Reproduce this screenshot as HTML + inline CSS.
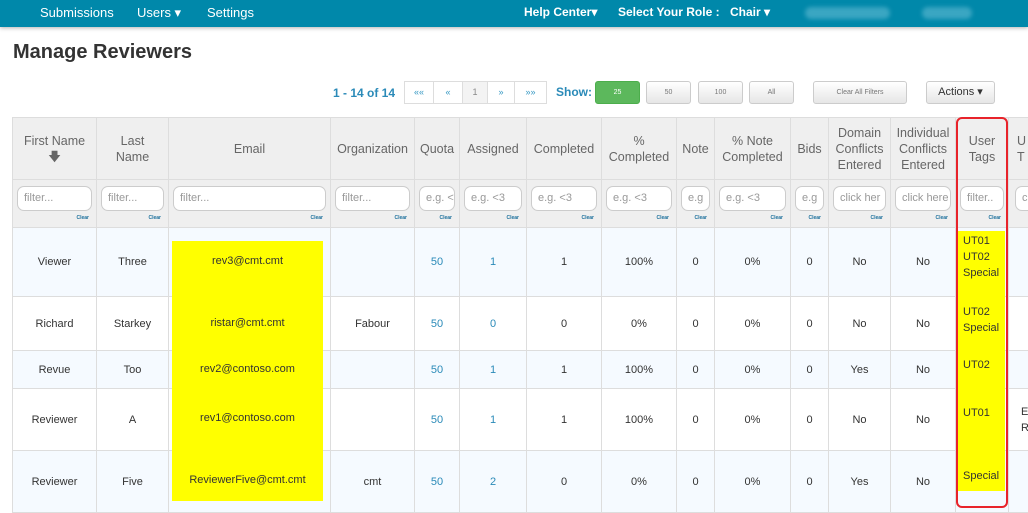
<!DOCTYPE html>
<html><head><meta charset="utf-8"><style>
*{box-sizing:border-box;margin:0;padding:0}
body{width:1028px;height:511px;overflow:hidden;background:#fff;font-family:"Liberation Sans",Arial,sans-serif;position:relative;color:#333}
.nav{position:absolute;left:0;top:0;width:1028px;height:27px;background:#0088aa;box-shadow:0 1px 4px rgba(0,0,0,.3);color:#fff;font-size:13px}
.nav span{position:absolute;top:5px}
.blur{position:absolute;top:7px;height:12px;background:#3aa6c2;border-radius:6px;filter:blur(2px)}
h1{position:absolute;left:13px;top:41px;font-size:20px;font-weight:bold;color:#333}
.pg{position:absolute;top:81px;height:23px;border:1px solid #ddd;font-size:9px;color:#3a9ac4;text-align:center;line-height:21px;background:#fff}
.btn{position:absolute;top:81px;height:23px;border:1px solid #ccc;border-radius:3px;background:linear-gradient(#fff,#e6e6e6);font-size:7px;color:#777;text-align:center;line-height:21px}
table{position:absolute;left:12px;top:117px;width:1036px;border-collapse:collapse;table-layout:fixed;font-size:12px}
td,th{border:1px solid #ddd;text-align:center;vertical-align:middle;font-weight:normal;color:#555;overflow:hidden}
th{background:#efefef;font-size:12.5px;line-height:16px;height:62px;color:#666;white-space:nowrap}
tr.f td{background:#efefef;height:48px;position:relative;vertical-align:top;padding-top:6px}
.in{display:block;margin:0 auto;height:25px;border:1px solid #ccc;border-radius:7px;background:#fff;font-size:11px;color:#999;text-align:left;padding:5px 0 0 6px;overflow:hidden;white-space:nowrap;width:calc(100% - 8px)}
.cl{position:absolute;right:7px;bottom:6px;font-size:5px;color:#1b6f9c;font-weight:bold}
td{font-size:11px;color:#333}
tr.a td{background:#f5faff}
.b{color:#2a8ab8}
.yl{position:absolute;background:#ffff00}
.tag{position:absolute;left:963px;font-size:11px;line-height:16px;color:#333}
</style></head><body>
<div class="nav">
<span style="left:40px">Submissions</span><span style="left:137px">Users ▾</span><span style="left:207px">Settings</span>
<span style="left:524px;font-weight:bold;font-size:12px">Help Center▾</span>
<span style="left:618px;font-weight:bold;font-size:12px">Select Your Role :</span>
<span style="left:730px;font-weight:bold;font-size:12px">Chair ▾</span>
<div class="blur" style="left:805px;width:85px"></div><div class="blur" style="left:922px;width:50px"></div>
</div>
<h1>Manage Reviewers</h1>
<div style="position:absolute;left:333px;top:86px;font-size:12px;font-weight:bold;color:#2a8ab8">1 - 14 of 14</div>
<div class="pg" style="left:404px;width:30px">««</div><div class="pg" style="left:433px;width:30px">«</div><div class="pg" style="left:462px;width:26px;background:#f3f3f3;color:#888">1</div><div class="pg" style="left:487px;width:28px">»</div><div class="pg" style="left:514px;width:33px">»»</div>
<div style="position:absolute;left:556px;top:85px;font-size:12px;font-weight:bold;color:#2a8ab8">Show:</div>
<div class="btn" style="left:595px;width:45px;background:#5cb85c;border-color:#4cae4c;color:#fff">25</div>
<div class="btn" style="left:646px;width:45px">50</div>
<div class="btn" style="left:698px;width:45px">100</div>
<div class="btn" style="left:749px;width:45px">All</div>
<div class="btn" style="left:813px;width:94px">Clear All Filters</div>
<div class="btn" style="left:926px;width:69px;font-size:11px;color:#333">Actions ▾</div>
<table>
<colgroup><col style="width:84px"><col style="width:72px"><col style="width:162px"><col style="width:84px"><col style="width:45px"><col style="width:67px"><col style="width:75px"><col style="width:75px"><col style="width:38px"><col style="width:76px"><col style="width:38px"><col style="width:62px"><col style="width:65px"><col style="width:53px"><col style="width:40px"></colgroup>
<tr><th>First Name<br>🡇</th><th>Last<br>Name</th><th>Email</th><th>Organization</th><th>Quota</th><th>Assigned</th><th>Completed</th><th>%<br>Completed</th><th>Note</th><th>% Note<br>Completed</th><th>Bids</th><th>Domain<br>Conflicts<br>Entered</th><th>Individual<br>Conflicts<br>Entered</th><th>User<br>Tags</th><th style="text-align:left;padding-left:8px">U<br>T</th></tr>
<tr class="f"><td><span class="in">filter...</span><span class="cl">Clear</span></td><td><span class="in">filter...</span><span class="cl">Clear</span></td><td><span class="in">filter...</span><span class="cl">Clear</span></td><td><span class="in">filter...</span><span class="cl">Clear</span></td><td><span class="in">e.g. &lt;</span><span class="cl">Clear</span></td><td><span class="in">e.g. &lt;3</span><span class="cl">Clear</span></td><td><span class="in">e.g. &lt;3</span><span class="cl">Clear</span></td><td><span class="in">e.g. &lt;3</span><span class="cl">Clear</span></td><td><span class="in">e.g</span><span class="cl">Clear</span></td><td><span class="in">e.g. &lt;3</span><span class="cl">Clear</span></td><td><span class="in">e.g</span><span class="cl">Clear</span></td><td><span class="in">click her</span><span class="cl">Clear</span></td><td><span class="in">click here</span><span class="cl">Clear</span></td><td><span class="in">filter..</span><span class="cl">Clear</span></td><td><span class="in" style="margin-left:6px">cli</span></td></tr>
<tr class="a" style="height:69px"><td>Viewer</td><td>Three</td><td></td><td></td><td class="b">50</td><td class="b">1</td><td>1</td><td>100%</td><td>0</td><td>0%</td><td>0</td><td>No</td><td>No</td><td></td><td></td></tr>
<tr style="height:54px"><td>Richard</td><td>Starkey</td><td></td><td>Fabour</td><td class="b">50</td><td class="b">0</td><td>0</td><td>0%</td><td>0</td><td>0%</td><td>0</td><td>No</td><td>No</td><td></td><td></td></tr>
<tr class="a" style="height:38px"><td>Revue</td><td>Too</td><td></td><td></td><td class="b">50</td><td class="b">1</td><td>1</td><td>100%</td><td>0</td><td>0%</td><td>0</td><td>Yes</td><td>No</td><td></td><td></td></tr>
<tr style="height:62px"><td>Reviewer</td><td>A</td><td></td><td></td><td class="b">50</td><td class="b">1</td><td>1</td><td>100%</td><td>0</td><td>0%</td><td>0</td><td>No</td><td>No</td><td></td><td style="text-align:left;padding-left:12px;line-height:16px">Ex<br>Rev</td></tr>
<tr class="a" style="height:62px"><td>Reviewer</td><td>Five</td><td></td><td>cmt</td><td class="b">50</td><td class="b">2</td><td>0</td><td>0%</td><td>0</td><td>0%</td><td>0</td><td>Yes</td><td>No</td><td></td><td></td></tr>
</table>
<div class="yl" style="left:172px;top:241px;width:151px;height:260px"></div>
<div style="position:absolute;left:172px;width:151px;text-align:center;font-size:11px;color:#333">
<div style="position:absolute;top:255px;width:151px">rev3@cmt.cmt</div>
<div style="position:absolute;top:317px;width:151px">ristar@cmt.cmt</div>
<div style="position:absolute;top:363px;width:151px">rev2@contoso.com</div>
<div style="position:absolute;top:412px;width:151px">rev1@contoso.com</div>
<div style="position:absolute;top:474px;width:151px">ReviewerFive@cmt.cmt</div>
</div>
<div class="yl" style="left:958px;top:231px;width:47px;height:260px"></div>
<div class="tag" style="top:233px">UT01<br>UT02<br>Special</div>
<div class="tag" style="top:304px">UT02<br>Special</div>
<div class="tag" style="top:357px">UT02</div>
<div class="tag" style="top:405px">UT01</div>
<div class="tag" style="top:468px">Special</div>
<div style="position:absolute;left:956px;top:117px;width:52px;height:391px;border:2px solid #e8232a;border-radius:6px"></div>
</body></html>
